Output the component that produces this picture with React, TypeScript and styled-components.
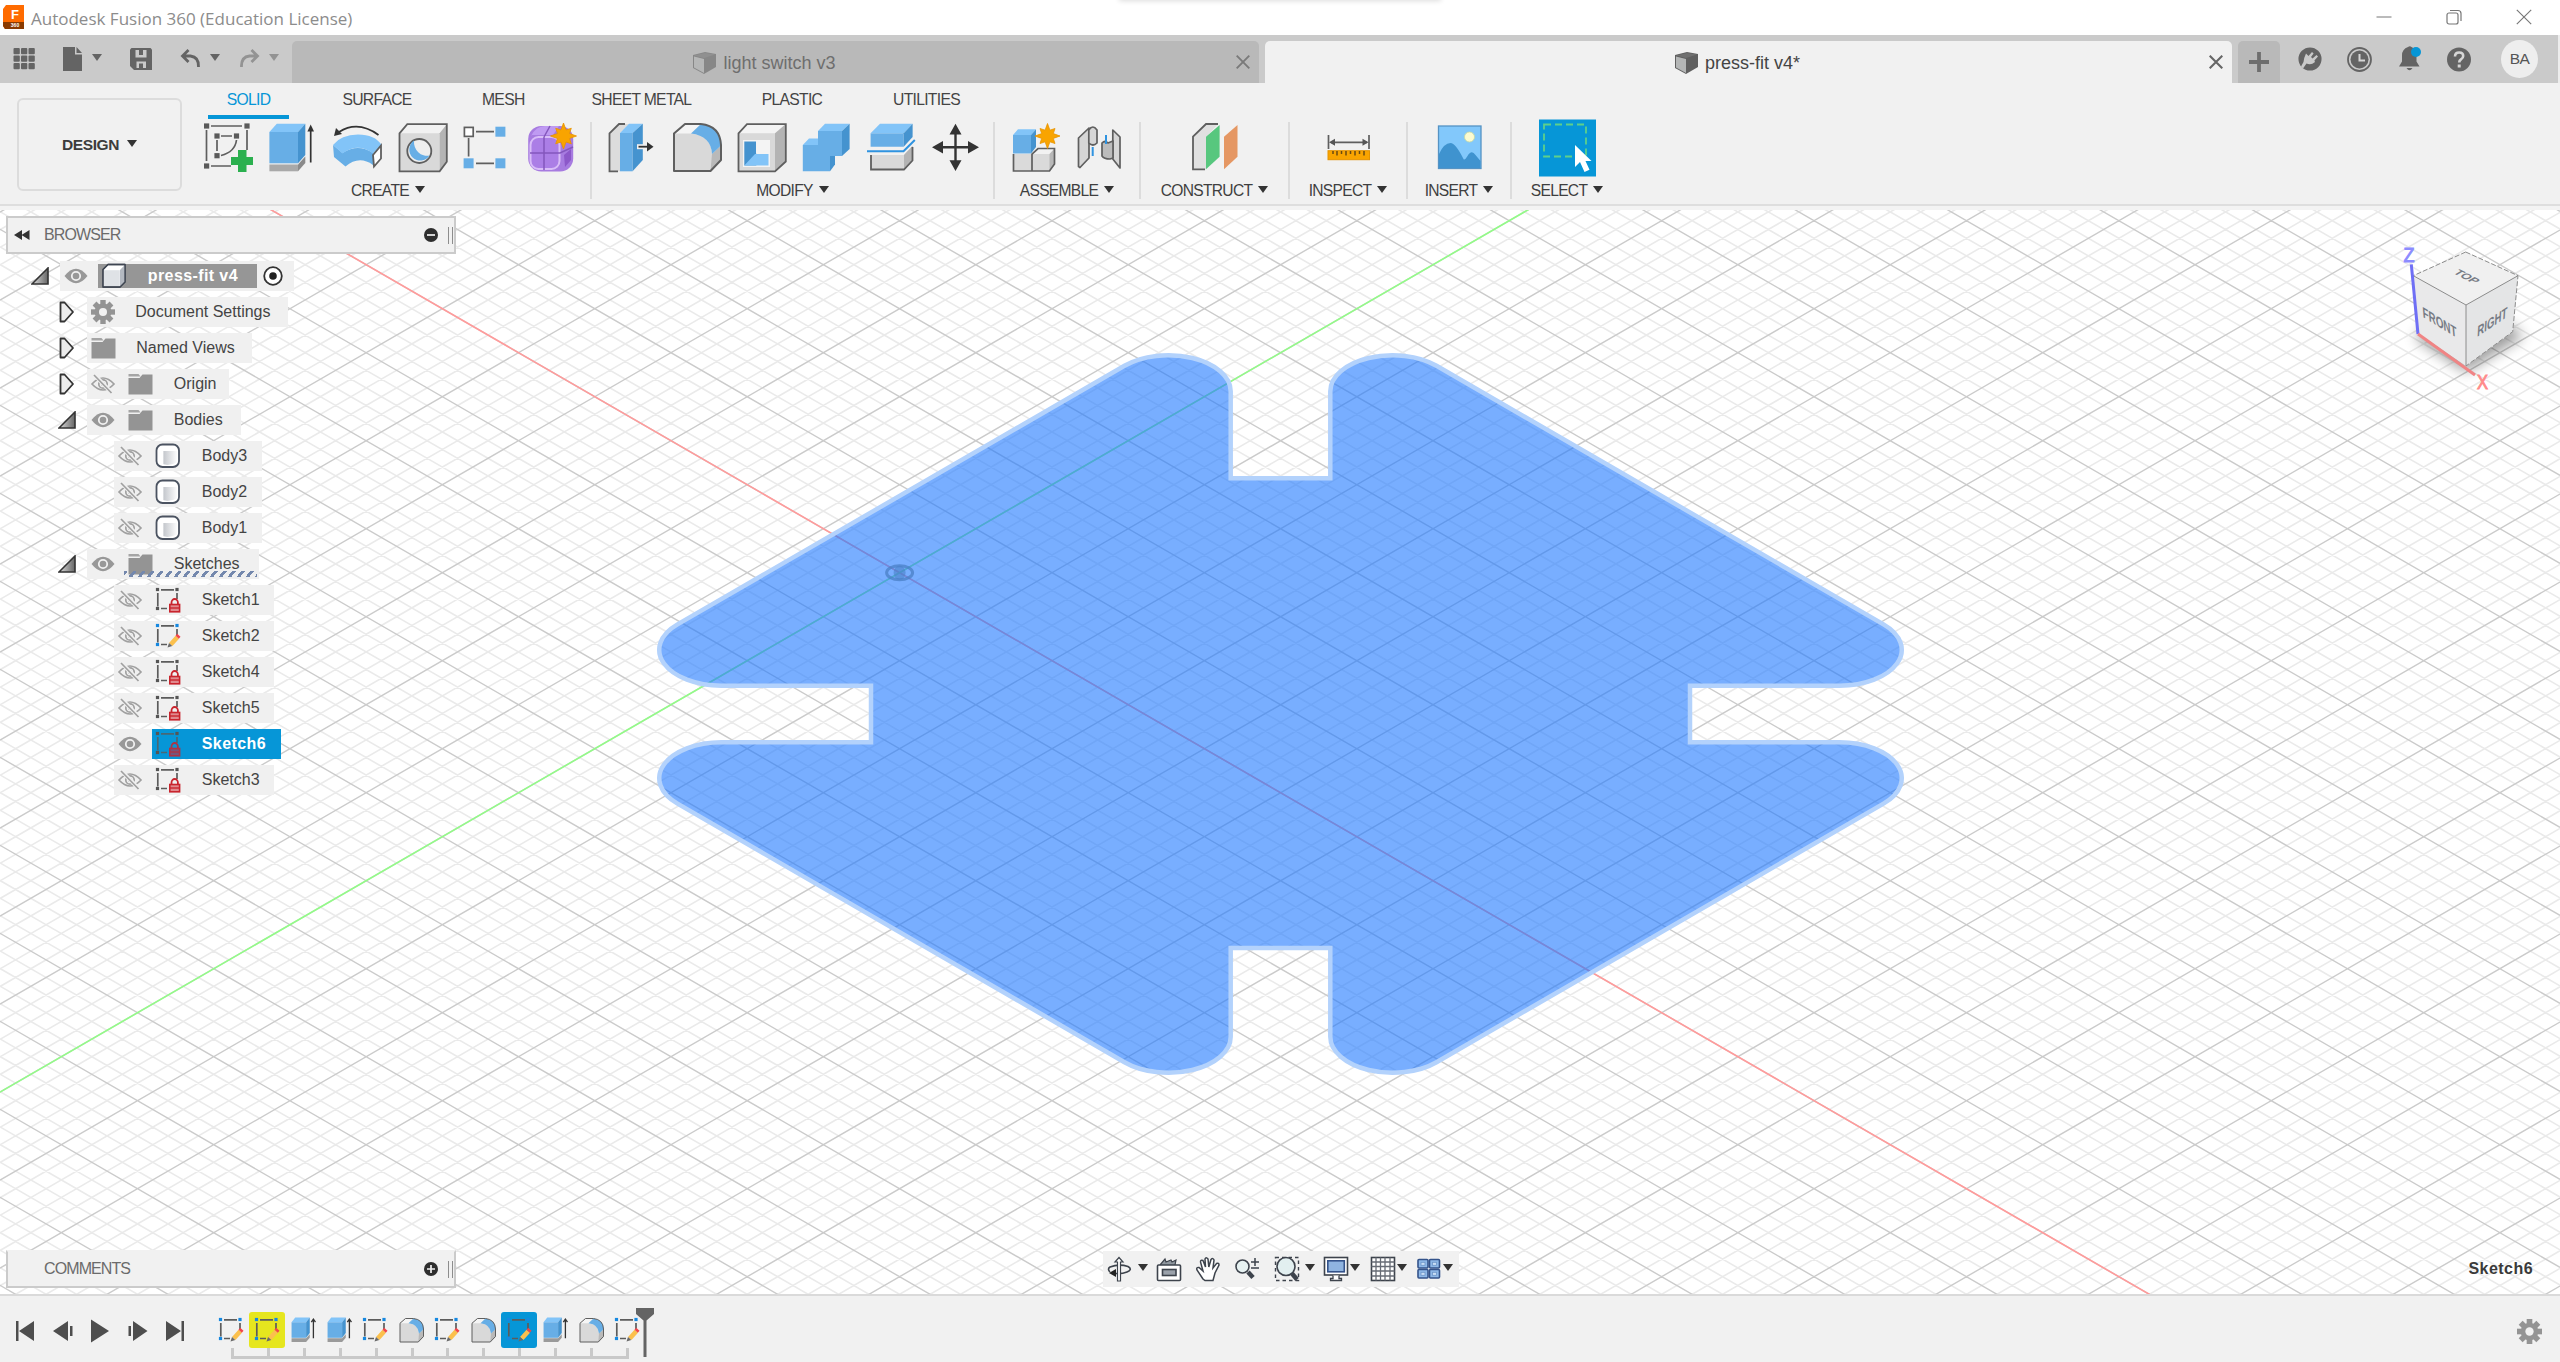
import React from "react";
import styled, { createGlobalStyle } from "styled-components";

const Global = createGlobalStyle`
  * { box-sizing: border-box; }
  body { margin: 0; background: #f0f0f0; overflow: hidden; }
  svg { display: block; flex: none; }
`;

const BLUE = "#0696d7";
const TOP = "#82c4f8";
const FACE = "#67aee6";
const SIDE = "#4593cf";
const EDGE = "#5f5f5f";

const Window = styled.div`
  width: 2560px;
  height: 1362px;
  display: flex;
  flex-direction: column;
  font-family: "Liberation Sans", Arial, sans-serif;
  color: #3c3c3c;
`;

const TitleBar = styled.header`
  position: relative;
  height: 35px;
  flex: none;
  display: flex;
  align-items: center;
  background: #fff;
  padding: 0 28px 2px 3px;
  overflow: hidden;
`;
const TitleText = styled.div`
  flex: 1;
  margin-left: 6px;
  padding-top: 4px;
  font: 17px/24px "Open Sans", "Noto Sans", sans-serif;
  letter-spacing: 0;
  color: #8c8c8c;
`;
const TitleShadow = styled.div`
  position: absolute;
  left: 1120px;
  top: -20px;
  width: 320px;
  height: 20px;
  box-shadow: 0 0 5px 1px #ddd;
`;
const WindowButtons = styled.div`
  display: flex;
  gap: 54px;
`;

const TabBar = styled.nav`
  height: 48px;
  flex: none;
  display: flex;
  align-items: flex-end;
  background: #cacaca;
  border-right: 2px solid #ededed;
`;
const QuickTools = styled.div`
  width: 291.5px;
  height: 48px;
  display: flex;
  align-items: center;
  padding-left: 13px;
`;
const QuickItem = styled.div<{ $w: number; $dim?: boolean }>`
  width: ${(p) => p.$w}px;
  display: flex;
  align-items: center;
  gap: 9px;
  color: ${(p) => (p.$dim ? "#939393" : "#646464")};
`;
const DocTab = styled.div<{ $active?: boolean }>`
  width: 967px;
  height: 42px;
  margin-right: 6px;
  padding-right: 9px;
  display: flex;
  align-items: center;
  border-radius: 5px 5px 0 0;
  background: ${(p) => (p.$active ? "#f1f1f1" : "#b9b9b9")};
  color: ${(p) => (p.$active ? "#444" : "#6e6e6e")};
  font-size: 18px;
`;
const DocName = styled.div`
  flex: 1;
  padding-left: 1px;
  padding-top: 2px;
  display: flex;
  justify-content: center;
  align-items: center;
  gap: 6px;
`;
const NewTab = styled.div`
  width: 42px;
  height: 42px;
  display: flex;
  align-items: center;
  justify-content: center;
  border-radius: 5px 5px 0 0;
  background: #b9b9b9;
`;
const AccountTools = styled.div`
  flex: 1;
  height: 48px;
  display: flex;
  align-items: center;
  justify-content: space-between;
  padding: 0 20px 0 18px;
`;
const Avatar = styled.div`
  width: 37px;
  height: 38px;
  border-radius: 50%;
  margin-left: 4px;
  background: #eee;
  display: flex;
  align-items: center;
  justify-content: center;
  font-size: 15.5px;
  letter-spacing: -0.5px;
  color: #555;
`;

const Ribbon = styled.section`
  height: 127px;
  flex: none;
  display: flex;
  padding-left: 17px;
  background: #f1f1f1;
  border-bottom: 4px solid #f3f3f3;
  box-shadow: inset 0 -2px 0 #dedede;
`;
const Workspace = styled.button`
  width: 165px;
  height: 93px;
  margin: 15px 4px 0 0;
  padding: 0;
  display: flex;
  align-items: center;
  justify-content: center;
  gap: 8px;
  background: #f1f1f1;
  border: 2px solid #dcdcdc;
  border-radius: 6px;
  font: bold 15.5px "Liberation Sans", sans-serif;
  letter-spacing: -0.4px;
  color: #3c3c3c;
`;
const RibbonMain = styled.div`
  display: flex;
  flex-direction: column;
`;
const RibbonTabs = styled.div`
  height: 36px;
  flex: none;
  padding-left: 22px;
  display: flex;
`;
const RibbonTab = styled.div<{ $active?: boolean; $gap: number; $w: number }>`
  width: ${(p) => p.$w}px;
  margin-right: ${(p) => p.$gap}px;
  text-align: center;
  white-space: nowrap;
  font-size: 15.7px;
  line-height: 32px;
  padding-top: 1px;
  letter-spacing: -0.7px;
  color: ${(p) => (p.$active ? BLUE : "#444")};
  border-bottom: 4px solid ${(p) => (p.$active ? BLUE : "transparent")};
`;
const Groups = styled.div`
  display: flex;
`;
const Group = styled.div<{ $w: number; $last?: boolean }>`
  width: ${(p) => p.$w}px;
  height: 77px;
  margin-top: 3px;
  display: flex;
  flex-direction: column;
  align-items: center;
  border-right: ${(p) => (p.$last ? 0 : 2)}px solid #dcdcdc;
`;
const IconRow = styled.div<{ $shift: number }>`
  height: 52px;
  flex: none;
  padding-left: ${(p) => p.$shift}px;
  display: flex;
  align-items: center;
  gap: 14.8px;
`;
const GroupLabel = styled.div`
  height: 34px;
  flex: none;
  display: flex;
  align-items: center;
  gap: 6px;
  font-size: 15.6px;
  letter-spacing: -0.7px;
  color: #3f3f3f;
`;
const Caret = styled.i<{ $c?: string }>`
  width: 0;
  height: 0;
  margin-top: -3px;
  border: 5px solid transparent;
  border-top: 7px solid ${(p) => p.$c || "#333"};
  border-bottom: 0;
`;

const Viewport = styled.main`
  position: relative;
  height: 1084px;
  flex: none;
  background: #fff;
  overflow: hidden;
`;
const Panel = styled.div<{ $top: number; $open?: boolean }>`
  position: absolute;
  left: 6px;
  top: ${(p) => p.$top}px;
  width: 450px;
  height: 38px;
  padding: 0 1px 0 6px;
  display: flex;
  align-items: center;
  background: #f1f1f1;
  border: 2px solid #cbcbcb;
  border-top-color: ${(p) => (p.$open ? "#cbcbcb" : "#f1f1f1")};
  font-size: 16px;
  letter-spacing: -0.9px;
  color: #6b6b6b;
`;
const PanelTitle = styled.span`
  flex: 1;
  padding-left: 14px;
`;
const Handle = styled.div`
  width: 5px;
  height: 17px;
  margin-left: 10px;
  border-left: 1.5px solid #8d8d8d;
  border-right: 1.5px solid #8d8d8d;
`;
const Tree = styled.div`
  position: absolute;
  left: 0;
  top: 48px;
  display: flex;
  flex-direction: column;
`;
const TreeRow = styled.div`
  height: 36px;
  display: flex;
  align-items: center;
`;
const Expander = styled.div<{ $x: number; $w: number }>`
  width: ${(p) => p.$w}px;
  padding-left: ${(p) => p.$x}px;
`;
const RowBody = styled.div<{ $w: number }>`
  position: relative;
  width: ${(p) => p.$w}px;
  height: 30px;
  padding-left: 3.8px;
  display: flex;
  align-items: center;
  background: #f0f0f0;
`;
const Vis = styled.div`
  width: 37.5px;
  flex: none;
`;
const RowLabel = styled.span`
  padding-left: 20.5px;
  white-space: nowrap;
  font-size: 16px;
  color: #444;
`;
const Picked = styled.div<{ $bg: string; $w: number; $h: number }>`
  width: ${(p) => p.$w}px;
  height: ${(p) => p.$h}px;
  flex: none;
  margin: 0 6px 0 -3.8px;
  padding-left: 3.8px;
  display: flex;
  align-items: center;
  background: ${(p) => p.$bg};
  ${RowLabel} { color: #fff; font-weight: bold; letter-spacing: 0.4px; font-size: 16px; }
`;
const Hatch = styled.div`
  position: absolute;
  left: 37px;
  right: 2px;
  bottom: 2px;
  height: 6px;
  background: repeating-linear-gradient(128deg, #7488ad 0 3px, transparent 3px 7.1px);
`;
const NavBar = styled.div`
  position: absolute;
  left: 1103px;
  top: 1041px;
  width: 356px;
  height: 36px;
  padding-left: 3px;
  display: flex;
  align-items: center;
  background: #f1f1f1;
`;
const NavItem = styled.div<{ $w: number; $gap: number }>`
  width: ${(p) => p.$w}px;
  display: flex;
  align-items: center;
  gap: ${(p) => p.$gap}px;
`;
const ActiveName = styled.div`
  position: absolute;
  right: 27px;
  top: 1050px;
  font: bold 16px/18px "Liberation Sans", sans-serif;
  letter-spacing: 0.45px;
  color: #3a3a3a;
`;

const Timeline = styled.footer`
  flex: 1;
  display: flex;
  align-items: flex-start;
  background: #f1f1f1;
  border-top: 2px solid #dadada;
`;
const Playback = styled.div`
  width: 213px;
  height: 70px;
  display: flex;
  align-items: center;
  padding: 0 0 0 15px;
  gap: 17.5px;
`;
const Features = styled.div`
  padding-top: 16px;
  position: relative;
`;
const FeatureRow = styled.div`
  display: flex;
`;
const Feature = styled.div<{ $bg?: string }>`
  width: 36px;
  height: 36px;
  display: flex;
  align-items: center;
  justify-content: center;
  border-radius: 3px;
  background: ${(p) => p.$bg || "transparent"};
`;
const Track = styled.div`
  display: flex;
  width: 398px;
  height: 11px;
  margin-left: 18px;
  justify-content: space-between;
  border-bottom: 3px solid #c9c9c9;
`;
const Tick = styled.div`
  width: 3px;
  height: 8px;
  background: #c9c9c9;
`;
const Marker = styled.div`
  position: absolute;
  left: 423px;
  top: 12px;
`;
const TimelineEnd = styled.div`
  margin-left: auto;
  height: 70px;
  padding-right: 18px;
  display: flex;
  align-items: center;
`;

/* ---------- shared drawings ---------- */
type Pts = { p: string; f: string };
const Poly = ({ p, f }: Pts) => <polygon points={p} fill={f} />;
const Star = ({ x, y, r }: { x: number; y: number; r: number }) => {
  const pts = Array.from({ length: 16 }, (_, i) => {
    const a = (i * Math.PI) / 8 - Math.PI / 2;
    const q = i % 2 ? r * 0.5 : i % 4 ? r * 0.85 : r;
    return `${(x + q * Math.cos(a)).toFixed(1)},${(y + q * Math.sin(a)).toFixed(1)}`;
  }).join(" ");
  return <polygon points={pts} fill="#f9a400" stroke="#e79300" strokeWidth=".8" />;
};
const Tool = ({ children }: { children: React.ReactNode }) => (
  <svg width="50" height="50" viewBox="0 0 50 50">{children}</svg>
);
const Gear = ({ s = 24 }: { s?: number }) => (
  <svg width={s} height={s} viewBox="-12 -12 24 24" fill="#949494">
    {[0, 45, 90, 135].map((a) => (
      <rect key={a} x="-2.7" y="-12" width="5.4" height="24" transform={`rotate(${a})`} />
    ))}
    <circle r="8.4" />
    <circle r="4" fill="#f1f1f1" />
  </svg>
);
const Cross = ({ s, w, c }: { s: number; w: number; c: string }) => (
  <svg width={s} height={s} viewBox="0 0 14 14" stroke={c} strokeWidth={w}>
    <path d="M.7.7 13.3 13.3M13.3.7.7 13.3" />
  </svg>
);
const DocCube = ({ dim }: { dim?: boolean }) => (
  <svg width="25" height="24" viewBox="0 0 25 24" opacity={dim ? 0.55 : 1}>
    <path d="M1 4 13 1l11 2v13L12 23 1 17z" fill="#606060" />
    <path d="M2 5.5 12 8v14L2 16.5z" fill="#b4b6b6" />
    <path d="M2 4.500 13 2l10 1.500L12 7z" fill="#707070" />
  </svg>
);
const Eye = ({ off }: { off?: boolean }) =>
  off ? (
    <svg width="24" height="20" viewBox="0 0 24 20" fill="none" stroke="#a0a0a0" strokeWidth="1.7">
      <path d="M1 10Q12-2 23 10 12 22 1 10z" />
      <circle cx="12" cy="10" r="4.200" />
      <circle cx="12" cy="10" r="1.200" />
      <path d="M3.500 1 21 19" stroke="#f0f0f0" strokeWidth="4" />
      <path d="M3 1 20.500 19" />
    </svg>
  ) : (
    <svg width="24" height="20" viewBox="0 0 24 20">
      <path d="M.500 10Q12-4.500 23.500 10 12 24.500.500 10z" fill="#989898" />
      <circle cx="12" cy="10" r="4.200" fill="none" stroke="#f0f0f0" strokeWidth="1.800" />
    </svg>
  );
const Folder = () => (
  <svg width="25" height="22" viewBox="0 0 25 22" fill="#949494">
    <path d="M.5 1h10l2 2.500H.5z" fill="#a5a5a5" />
    <path d="M.5 5h11l3-3.500h10v20H.5z" />
  </svg>
);
const BodyIcon = () => (
  <svg width="26" height="26" viewBox="0 0 26 26">
    <defs>
      <linearGradient id="cyl">
        <stop offset="0" stopColor="#fff" />
        <stop offset=".25" stopColor="#fff" />
        <stop offset=".3" stopColor="#c6c9ce" />
        <stop offset="1" stopColor="#fff" />
      </linearGradient>
    </defs>
    <rect x="1.500" y="1.500" width="22.500" height="22.500" rx="6" fill="#fff" stroke="#4b5361" strokeWidth="1.800" />
    <path d="M3 8h19.500v11q-10 6-19.500 0z" fill="url(#cyl)" />
  </svg>
);
const RootIcon = () => (
  <svg width="26" height="26" viewBox="0 0 26 26" stroke="#3f4652" strokeWidth="1.300" strokeLinejoin="round">
    <path d="M2 6.500 7 1.500h17v17.500l-5 5H2z" fill="#fff" />
    <path d="M2.800 7.200h16v16h-16z" fill="#dfe2e6" stroke="none" />
    <path d="M19 7 24 1.800V19l-5 5z" fill="#b4b9c1" stroke="none" />
    <path d="M2 6.500 7 1.500h17v17.500l-5 5H2z" fill="none" />
  </svg>
);
const Pencil = () => (
  <g>
    <path d="M14 20 20.500 12.800l3.500 3-6.500 7.200z" fill="#fbc04d" />
    <path d="M20.500 12.800l1.700-2 3.300 3-1.700 2z" fill="#f2454a" />
    <path d="M14 20l3.300 3-4.800 1.500z" fill="#6a6a6a" />
  </g>
);
const SketchIcon = ({ kind, on }: { kind: "lock" | "edit"; on?: boolean }) => {
  const dot = kind === "edit" ? "#1688e0" : "#555";
  return (
    <svg width="26" height="26" viewBox="0 0 26 26">
      <path d="M6 2.800h13M2.800 6v13.500M22 6v6M6 21.500h6" stroke="#5c5c5c" strokeWidth="1.700" opacity={on ? 0.8 : 1} />
      {[[2.5, 2.5], [22, 2.5], [2.5, 21.5]].map(([x, y]) => (
        <rect key={`${x}-${y}`} x={x - 1.6} y={y - 1.6} width="3.200" height="3.200" fill={dot} />
      ))}
      {kind === "edit" ? (
        <Pencil />
      ) : (
        <g stroke="#c9242d" opacity={on ? 0.85 : 1}>
          <path d="M16.500 18v-2.500a3.200 3.500 0 0 1 6.400 0V18" fill="none" strokeWidth="1.800" />
          <rect x="14.800" y="17.500" width="9.800" height="7.300" fill={on ? "#8a4a6c" : "#e08a8e"} strokeWidth="1.600" />
          <path d="M15 21h9" strokeWidth="1.400" />
        </g>
      )}
    </svg>
  );
};
const ExtrudeSmall = () => (
  <svg width="26" height="26" viewBox="0 0 50 50">
    <Poly p="3,41 31,41 38,33 38,40 31,48 3,48" f="#9a9a9a" />
    <Poly p="3,10 31,10 31,40 3,40" f={FACE} />
    <Poly p="3,10 10,1 38,1 31,10" f={TOP} />
    <Poly p="31,10 38,1 38,31 31,40" f={SIDE} />
    <path d="M45 6v35M41 10l4-6 4 6" stroke="#333" strokeWidth="2.500" fill="none" />
  </svg>
);
const FilletShape = () => (
  <g strokeLinejoin="round">
    <path d="M2 10.500 13 1h16l-10 9.500Q39 12 40 31l9-9v15L38.500 48H2z" fill="#d9d9d9" />
    <path d="M2 10.500 13 1h16l-10 9.500z" fill="#f5f5f5" />
    <path d="M40 31l9.500-9v15L38.500 48z" fill="#b9b9b9" />
    <path d="M19 10.500 29 1Q49 4 49.500 22L40 31Q39 13 19 10.500z" fill={FACE} />
    <path d="M29 1H13L2 10.500V48h36.500L49 37V22Q48 3 29 1" fill="none" stroke={EDGE} strokeWidth="2" />
  </g>
);

/* ---------- ribbon icons ---------- */
const sq = (x: number, y: number, f = "#5a5a5a", r = 2.6) => (
  <rect key={`${x},${y}`} x={x - r} y={y - r} width={2 * r} height={2 * r} fill={f} />
);
const CreateIcons = () => (
  <>
    <Tool>
      <path d="M7 3h31M2.500 7v31M43 7v20M7 43h20M17 13h11M13 17v11M32.500 17Q31 29 17 32.500" fill="none" stroke={EDGE} strokeWidth="1.700" />
      {[[2.6, 3], [43, 3], [2.6, 43], [13, 13], [32.5, 13], [13, 32.700]].map(([x, y]) => sq(x, y))}
      <path d="M34 27h8.500v7h6.500v8h-6.500v7H34v-7h-7v-8h7z" fill="#2bb04f" />
    </Tool>
    <Tool>
      <Poly p="1.4,41.5 30,41.5 30,48.3 1.4,48.3" f="#a9a9a9" />
      <Poly p="30,41.5 37.3,33.500 37.3,40 30,48.3" f="#8a8a8a" />
      <Poly p="1.4,9 30,9 30,40.3 1.4,40.3" f={FACE} />
      <Poly p="1.4,9 8.800,.7 37.3,.7 30,9" f={TOP} />
      <Poly p="30,9 37.3,.7 37.3,32 30,40.3" f={SIDE} />
      <path d="M42.700 7v32.500" stroke="#333" strokeWidth="1.700" />
      <Poly p="42.700,1.500 46,8.500 39.400,8.500" f="#333" />
    </Tool>
    <Tool>
      <path d="M0 22 9.500 30Q25 20 40 30v12q-14-10-27.500 1.500L1 34z" fill={FACE} />
      <path d="M0 22Q8 11.500 25 11.500T48.500 22L40 30.500Q25 19 9.500 30.500z" fill={TOP} />
      <path d="M40 32l8-9.500v13L41 43.500z" fill="#fff" stroke={EDGE} strokeWidth="1.800" />
      <path d="M6 9Q25-3 45.500 12" fill="none" stroke="#333" strokeWidth="1.800" />
      <Poly p="1,13 3,5 9,11" f="#333" />
    </Tool>
    <Tool>
      <path d="M1.200 10.300 9.300 1H49v37.700L41.600 48.300H1.200z" fill="#f2f2f2" />
      <Poly p="1.200,10.300 41.600,10.300 41.600,48.300 1.200,48.300" f="#d9d9d9" />
      <Poly p="41.600,10.300 49,1 49,38.700 41.600,48.300" f="#b4b4b4" />
      <path d="M1.500 10.300 9.300 1.200H48.800v37.500L41.600 48.300H1.500z" fill="none" stroke={EDGE} strokeWidth="1.800" />
      <circle cx="21.300" cy="28" r="12" fill="#eee" stroke={EDGE} strokeWidth="1.800" />
      <path d="M16 17.500a11 11 0 1 0 15.500 15A13 14 0 0 1 16 17.500z" fill={FACE} />
    </Tool>
    <Tool>
      <path d="M13 8.700h18M5.600 15v18.500M13 40.300h18" stroke={EDGE} strokeWidth="1.700" />
      <rect x="1.400" y="4.400" width="8.800" height="9" fill="#fff" stroke={EDGE} strokeWidth="1.700" />
      {[[37.4, 8.7], [5.6, 40.300], [37.4, 40.300]].map(([x, y]) => sq(x, y, FACE, 5))}
    </Tool>
    <Tool>
      <rect x="1.200" y="3" width="45" height="45.500" rx="13" fill="#a77be0" />
      <path d="M4 13Q9 3 18 3h14l-6 9H4z" fill="#bf9af2" />
      <rect x="3.500" y="14" width="29" height="32" rx="8" fill="#ab7ee6" stroke="#d9bdf8" strokeWidth="2" />
      <path d="M17 14v33M3 30h30l13-6M17 14l6-11M33 30" stroke="#8457bd" strokeWidth="1.500" fill="none" />
      <path d="M37 32l7-6v11l-6 7z" fill="#8c58c9" />
      <Star x={36.500} y={13} r={13} />
    </Tool>
  </>
);
const ModifyIcons = () => (
  <>
    <Tool>
      <path d="M2.500 10.300 12 1h10l-9 9v38.300H2.500z" fill="#dcdcdc" />
      <path d="M18 1h-6L2.500 10.300v38H11" fill="none" stroke={EDGE} strokeWidth="1.800" />
      <Poly p="13,10 25.600,10 25.600,48.300 13,48.300" f={FACE} />
      <Poly p="13,10 22,.7 35.8,.7 25.600,10" f={TOP} />
      <Poly p="25.600,10 35.8,.7 35.8,37 25.600,48.300" f={SIDE} />
      <path d="M30 23.700h12" stroke="#f1f1f1" strokeWidth="5" />
      <path d="M31.500 23.700h10" stroke="#333" strokeWidth="1.800" />
      <Poly p="40,19 46.500,23.700 40,28.400" f="#333" />
    </Tool>
    <Tool><FilletShape /></Tool>
    <Tool>
      <path d="M1.500 10.300 10 1H48.800v37.500L38 48.300H1.500z" fill="#f4f4f4" />
      <Poly p="1.500,10.300 38,10.300 38,48.300 1.500,48.300" f="#d9d9d9" />
      <Poly p="38,10.300 48.800,1 48.800,38.500 38,48.300" f="#b4b4b4" />
      <path d="M1.500 10.300 10 1.200H48.800v37.300L38 48.300H1.500z" fill="none" stroke={EDGE} strokeWidth="1.800" />
      <rect x="6" y="17" width="27" height="27" fill="#f4f4f4" />
      <rect x="7.300" y="18.500" width="12" height="24" fill={SIDE} />
      <Poly p="7.300,42.500 18,31 31.500,31 31.500,42.500" f={TOP} />
      <rect x="19" y="18" width="14" height="12.500" fill="#f4f4f4" />
    </Tool>
    <Tool>
      <Poly p="1.800,22 17,22 17,8 41,8 41,33 29,33 29,48.300 1.800,48.300" f={FACE} />
      <Poly p="1.800,22 8,15.500 17,15.500 17,22" f={TOP} />
      <Poly p="17,8 24,.7 48.600,.7 41,8" f={TOP} />
      <Poly p="41,8 48.600,.7 48.600,26 41,33" f={SIDE} />
      <Poly p="29,33 34,33 34,41.500 29,48.300" f={SIDE} />
    </Tool>
    <Tool>
      <Poly p="4.600,10.300 37.7,10.300 37.7,23.700 4.600,23.700" f={FACE} />
      <Poly p="4.600,10.300 14,.7 46.600,.7 37.7,10.300" f={TOP} />
      <Poly p="37.7,10.300 46.600,.7 46.600,14 37.7,23.700" f={SIDE} />
      <path d="M1 28.300h36.500L48.800 17" fill="none" stroke="#2f93e0" strokeWidth="2" />
      <path d="M5 32h33l8.500-9v14.500L38 46.500H5z" fill="#d9d9d9" />
      <path d="M38 32l8.500-9v14.500L38 46.500z" fill="#b4b4b4" />
      <path d="M5 32v14.500h33l8.500-9V24" fill="none" stroke={EDGE} strokeWidth="1.800" />
    </Tool>
    <Tool>
      <path d="M24.500 8v33M8 24.300h33" stroke="#333" strokeWidth="2.400" />
      <path d="M24.500.8 30.500 11.500h-12zM24.500 48l6-10.700h-12zM1 24.300 12 18v12.600zM48 24.300 37 18v12.600z" fill="#333" />
    </Tool>
  </>
);
const AssembleIcons = () => (
  <>
    <Tool>
      <path d="M2.500 31h36l5-5.500V41l-5 7h-36z" fill="#dadada" />
      <path d="M22 31l5-5.500h16.500l-5 5.500z" fill="#f2f2f2" />
      <path d="M38.500 31l5-5.500V41l-5 7z" fill="#b8b8b8" />
      <path d="M2.500 31v17h36l5-7V25.500H27L21 31v17" fill="none" stroke={EDGE} strokeWidth="1.700" />
      <Poly p="2,12 20,12 20,30.500 2,30.500" f={FACE} />
      <Poly p="2,12 7,6.300 25,6.300 20,12" f={TOP} />
      <Poly p="20,12 25,6.300 25,24 20,30.500" f={SIDE} />
      <Star x={36.500} y={13} r={12.500} />
    </Tool>
    <Tool>
      <g fill="#d6d6d6" stroke={EDGE} strokeWidth="1.700" strokeLinejoin="round">
        <path d="M2.500 15 13 5v30L4 44.500l-1.500-1z" />
        <path d="M12.800 7q4-6 8.200 0v13q-4 4-8.200 0z" />
        <path d="M36.800 7l7.200 7v31l-7.200-9z" />
        <path d="M26 20q3-3 6 0l5-2v17l-3 1q-6 0-8-3z" fill="#bcbcbc" />
      </g>
      <path d="M16.700 24v9M30 12v9" stroke="#2f93e0" strokeWidth="2" />
    </Tool>
  </>
);
const ConstructIcon = () => (
  <Tool>
    <path d="M3 13.700 16 1h12L16 13.700v32.600H3z" fill="#e0e0e0" />
    <path d="M28 1H16L3 13.700v32.600h12" fill="none" stroke={EDGE} strokeWidth="1.800" />
    <Poly p="16,13.700 29.600,2 29.600,33.700 16,46.300" f="#57c77e" />
    <Poly p="34,13.700 47.500,2 47.500,33.700 34,46.300" f="#e59763" />
  </Tool>
);
const InspectIcon = () => (
  <Tool>
    <path d="M4.500 12v14M45 12v14M7 19.300h36" stroke={EDGE} strokeWidth="1.700" />
    <path d="M5 19.300l6-3.500v7zM44.500 19.300l-6-3.500v7z" fill="#555" />
    <rect x="4" y="27.700" width="41.500" height="9" fill="#f9a400" stroke="#e59300" />
    <path d="M9 28v3M13 28v4.500M17.500 28v3M22 28v4.500M26.500 28v3M31 28v4.500M35.500 28v3M40 28v4.500" stroke="#6b4a10" strokeWidth="1.500" />
  </Tool>
);
const InsertIcon = () => (
  <Tool>
    <rect x="3.500" y="3" width="42.500" height="42.500" fill="#82c8fb" stroke="#5593c4" strokeWidth="1.300" />
    <path d="M4 31q5-11 11.500-11 5 0 13 16 1 2 4-3 4-7 8-1l5 6v7H4z" fill="#3f93cf" />
    <circle cx="34.500" cy="14" r="5" fill="#fbfbd0" stroke="#c9d9a0" strokeWidth=".8" />
  </Tool>
);
const SelectTool = () => (
  <svg width="58" height="58" viewBox="0 0 58 58">
    <rect width="57" height="57" y=".5" fill={BLUE} />
    <path d="M5 5.500h42v32H5z" fill="none" stroke="#5ed08a" strokeWidth="1.800" strokeDasharray="7 4" />
    <path d="M36 26v22l5-5 4.500 10 5-2.200L46.500 42h6z" fill="#fff" />
  </svg>
);

/* ---------- viewport drawing ---------- */
const OX = 899.6;
const OY = 572.7;
const SLOPE = 0.5774;
const STEP = 17.6;
const gridPath = (major: boolean) => {
  let d = "";
  for (let k = -150; k <= 150; k++) {
    if ((k % 5 === 0) !== major) continue;
    for (const s of [SLOPE, -SLOPE]) {
      const y0 = OY + k * STEP - s * OX;
      const y1 = y0 + s * 2560;
      if (Math.max(y0, y1) < 205 || Math.min(y0, y1) > 1300) continue;
      d += `M0 ${y0.toFixed(1)}L2560 ${y1.toFixed(1)}`;
    }
  }
  return d;
};
const PLATE =
  "M1124.500 365.800A62.200 35.900 0 0 1 1230.700 391.200V478.300H1330.300V391.200A62.200 35.900 0 0 1 1436.500 365.800" +
  "L1883.500 624.400A62.200 35.900 0 0 1 1839.500 685.700H1690V742.300H1839.500A62.200 35.900 0 0 1 1883.500 803.600" +
  "L1436.500 1062.200A62.200 35.900 0 0 1 1330.300 1036.800V948H1230.700V1036.800A62.200 35.900 0 0 1 1124.500 1062.200" +
  "L677.500 803.600A62.200 35.900 0 0 1 721.500 742.300H871V685.700H721.500A62.200 35.900 0 0 1 677.500 624.400Z";

const ViewCube = () => (
  <g>
    <defs>
      <filter id="soft" x="-30%" y="-30%" width="160%" height="160%">
        <feGaussianBlur stdDeviation="7" />
      </filter>
    </defs>
    <path d="M2415 338 2466 372 2524 336 2505 322 2430 322z" fill="#000" opacity=".38" filter="url(#soft)" />
    <path d="M2465.700 252 2518 275.700 2512.700 331.700 2466 366 2417.700 333.300 2413.300 275.700z" fill="#e9e9ea" />
    <path d="M2465.700 252 2518 275.700 2466 305 2413.300 275.700z" fill="#f0f0f0" />
    <path d="M2466 305 2518 275.700 2512.700 331.700 2466 366z" fill="#e4e5e6" />
    <g fill="none" stroke="#8c8c8c" strokeWidth="1">
      <path d="M2465.700 252 2518 275.700 2512.700 331.700 2466 366M2465.700 252 2413.300 275.700" strokeDasharray="5 2" />
      <path d="M2413.300 275.700 2466 305 2518 275.700M2466 305V366" />
    </g>
    <g fontFamily="Liberation Sans, sans-serif" fontSize="16" fill="#767b84" textAnchor="middle">
      <text transform="matrix(.78 .4 -.72 .42 2463.500 278.500)" fontWeight="bold" fontSize="13.500">TOP</text>
      <text transform="matrix(.62 .38 .08 .95 2440 327.500)" fontWeight="bold">FRONT</text>
      <text transform="matrix(.6 -.4 -.06 .95 2492 327)" fontWeight="bold">RIGHT</text>
    </g>
    <path d="M2411.300 264.300 2418 334" stroke="#6f6ff5" strokeWidth="3" />
    <path d="M2418 334 2475 375" stroke="#f08484" strokeWidth="3" />
    <g fontFamily="Liberation Sans, sans-serif" fontSize="21" strokeWidth="1" textAnchor="middle">
      <text x="2409" y="261.500" fill="#8c8cff" stroke="#8c8cff" textLength="11" lengthAdjust="spacingAndGlyphs">Z</text>
      <text x="2482.500" y="388.500" fill="#ff8a8a" stroke="#ff8a8a" textLength="11" lengthAdjust="spacingAndGlyphs">X</text>
    </g>
  </g>
);
const Scene = () => (
  <svg width="2560" height="1084" viewBox="0 210 2560 1084">
    <path d={gridPath(false)} stroke="#eaeaea" strokeWidth="1.600" />
    <path d={gridPath(true)} stroke="#cbcbcb" strokeWidth="1.400" />
    <path d={`M0 ${OY - SLOPE * OX}L2560 ${OY + SLOPE * (2560 - OX)}`} stroke="#ff9b9b" strokeWidth="1.600" />
    <path d={`M0 ${OY + SLOPE * OX}L2560 ${OY - SLOPE * (2560 - OX)}`} stroke="#93fb88" strokeWidth="1.600" />
    <path d={PLATE} fill="#1e78ff" fillOpacity=".6" />
    <path d={PLATE} fill="none" stroke="#b3d2fc" strokeWidth="4.500" />
    <ellipse cx={OX} cy={OY} rx="13" ry="7" fill="none" stroke="#4a7fc6" strokeWidth="3" strokeOpacity=".75" />
    <ellipse cx={OX} cy={OY} rx="6" ry="7" fill="#4a80c8" fillOpacity=".6" />
    <ViewCube />
  </svg>
);

/* ---------- tree ---------- */
const Closed = () => (
  <svg width="16" height="22" viewBox="0 0 16 22">
    <path d="M1.500 1.500h4L14 11l-8.500 9.500h-4z" fill="#ececec" stroke="#333" strokeWidth="1.800" strokeLinejoin="round" />
  </svg>
);
const Opened = () => (
  <svg width="18" height="18" viewBox="0 0 18 18">
    <defs>
      <linearGradient id="tri"><stop offset="0" stopColor="#ddd" /><stop offset="1" stopColor="#666" /></linearGradient>
    </defs>
    <path d="M1 17 17 1v16z" fill="url(#tri)" stroke="#333" strokeWidth="1.600" />
  </svg>
);
const Leaf = ({ name, w, icon }: { name: string; w: number; icon: React.ReactNode }) => (
  <TreeRow>
    <Expander $x={0} $w={114} />
    <RowBody $w={w}>
      <Vis><Eye off /></Vis>
      {icon}
      <RowLabel>{name}</RowLabel>
    </RowBody>
  </TreeRow>
);
const BrowserTree = () => (
  <Tree>
    <TreeRow>
      <Expander $x={31} $w={60}><Opened /></Expander>
      <RowBody $w={234}>
        <Vis><Eye /></Vis>
        <Picked $bg="#969696" $w={159} $h={24}><RootIcon /><RowLabel>press-fit v4</RowLabel></Picked>
        <svg width="20" height="20" viewBox="0 0 20 20">
          <circle cx="10" cy="10" r="8.800" fill="#fff" stroke="#333" strokeWidth="1.800" />
          <circle cx="10" cy="10" r="3.800" fill="#222" />
        </svg>
      </RowBody>
    </TreeRow>
    <TreeRow>
      <Expander $x={59} $w={87}><Closed /></Expander>
      <RowBody $w={201}><Gear /><RowLabel>Document Settings</RowLabel></RowBody>
    </TreeRow>
    <TreeRow>
      <Expander $x={59} $w={87}><Closed /></Expander>
      <RowBody $w={165}><Folder /><RowLabel>Named Views</RowLabel></RowBody>
    </TreeRow>
    <TreeRow>
      <Expander $x={59} $w={87}><Closed /></Expander>
      <RowBody $w={142}><Vis><Eye off /></Vis><Folder /><RowLabel>Origin</RowLabel></RowBody>
    </TreeRow>
    <TreeRow>
      <Expander $x={58} $w={87}><Opened /></Expander>
      <RowBody $w={154}><Vis><Eye /></Vis><Folder /><RowLabel>Bodies</RowLabel></RowBody>
    </TreeRow>
    {["Body3", "Body2", "Body1"].map((n) => <Leaf key={n} name={n} w={148} icon={<BodyIcon />} />)}
    <TreeRow>
      <Expander $x={58} $w={87}><Opened /></Expander>
      <RowBody $w={172}><Vis><Eye /></Vis><Folder /><RowLabel>Sketches</RowLabel><Hatch /></RowBody>
    </TreeRow>
    {["Sketch1", "Sketch2", "Sketch4", "Sketch5"].map((n) => (
      <Leaf key={n} name={n} w={160} icon={<SketchIcon kind={n === "Sketch2" ? "edit" : "lock"} />} />
    ))}
    <TreeRow>
      <Expander $x={0} $w={114} />
      <RowBody $w={38}>
        <Vis><Eye /></Vis>
        <Picked $bg={BLUE} $w={129.5} $h={30}><SketchIcon kind="lock" on /><RowLabel>Sketch6</RowLabel></Picked>
      </RowBody>
    </TreeRow>
    <Leaf name="Sketch3" w={160} icon={<SketchIcon kind="lock" />} />
  </Tree>
);
const RoundSign = ({ plus }: { plus?: boolean }) => (
  <svg width="14" height="14" viewBox="0 0 14 14">
    <circle cx="7" cy="7" r="7" fill="#2e2e2e" />
    <path d={plus ? "M3 7h8M7 3v8" : "M3 7h8"} stroke="#f1f1f1" strokeWidth="1.700" />
  </svg>
);

/* ---------- navigation bar ---------- */
const Ni = ({ children }: { children: React.ReactNode }) => (
  <svg width="26" height="26" viewBox="0 0 26 26" fill="none" stroke="#3d434c" strokeWidth="1.600">{children}</svg>
);
const Navigation = () => (
  <NavBar>
    <NavItem $w={50} $gap={6}>
      <Ni>
        <path d="M4 16Q1 13 4 11q9-3.500 18-.5 5 3-1 5.500-5 2-11 1.500" />
        <path d="M11.500 25V6H9l4-4.500L17 6h-2.500v19z" fill="#fff" strokeWidth="1.200" />
        <path d="M10 13v8l-7-4z" fill="#222" stroke="none" />
      </Ni>
      <Caret />
    </NavItem>
    <NavItem $w={39} $gap={0}>
      <Ni>
        <path d="M4 9 9 3l1 3 5-2 1 2 4-2-1 5" fill="#8f979f" strokeWidth="1.200" />
        <rect x="1.500" y="9" width="23" height="15.500" rx="1" fill="#fff" />
        <rect x="6.500" y="13.500" width="13.500" height="6" fill="#9aa1aa" />
      </Ni>
    </NavItem>
    <NavItem $w={39} $gap={0}>
      <Ni>
        <path d="M8 23 2 14q-1-3 2-2.500L8 15 5.500 6q0-2.500 2.500-1.500L10.500 11 10 3q1-2.500 3 0l.8 8L16 3.500q2-2 3 .5l-1 8 3.500-4.500q2.500-1 2.500 1.500L20 17l-2 7.500h-8z" fill="#fff" strokeWidth="1.500" />
      </Ni>
    </NavItem>
    <NavItem $w={40} $gap={0}>
      <Ni>
        <path d="M14 16l5 5.500" strokeWidth="4.500" />
        <circle cx="8.500" cy="10.500" r="6.500" fill="#e6f1f1" />
        <path d="M21 2v8M17 6h8M17 12h8" strokeWidth="1.500" />
      </Ni>
    </NavItem>
    <NavItem $w={49} $gap={5}>
      <Ni>
        <path d="M1.500 1.500h23v23h-23z" strokeDasharray="3.500 3" strokeWidth="1.400" />
        <path d="M18 17.500l5 6" strokeWidth="4.500" />
        <circle cx="12" cy="10.500" r="9" fill="#e2eff0" />
      </Ni>
      <Caret />
    </NavItem>
    <NavItem $w={47} $gap={1}>
      <Ni>
        <rect x="1.500" y="1.500" width="23" height="17.500" fill="#fff" />
        <rect x="4.800" y="4.800" width="16.500" height="11" fill="#8fb4e0" stroke="#34538a" />
        <path d="M10 19.500v3H7.500v2h11v-2H16v-3" fill="#fff" strokeWidth="1.300" />
      </Ni>
      <Caret />
    </NavItem>
    <NavItem $w={46} $gap={1}>
      <Ni>
        <rect x="1.500" y="1.500" width="23" height="23" fill="#fff" />
        <path d="M6 1.500v23M10.500 1.500v23M15 1.500v23M20 1.500v23M1.500 6h23M1.500 10.500h23M1.500 15h23M1.500 20h23" strokeWidth="1.300" stroke="#676c75" />
      </Ni>
      <Caret />
    </NavItem>
    <NavItem $w={40} $gap={1}>
      <Ni>
        {[[2, 3.500], [13.500, 3.500], [2, 13.500], [13.500, 13.500]].map(([x, y]) => (
          <g key={`${x}${y}`} stroke="#34538a">
            <rect x={x} y={y} width="10" height="8.500" rx="1" fill="#8fb9e8" />
            <rect x={x + 3} y={y + 2.800} width="4" height="3" fill="#c9def5" stroke="#6d95c8" strokeWidth=".8" />
          </g>
        ))}
      </Ni>
      <Caret />
    </NavItem>
  </NavBar>
);

/* ---------- timeline ---------- */
const Pb = ({ d, w = 20 }: { d: string; w?: number }) => (
  <svg width={w} height="24" viewBox={`0 0 ${w} 24`} fill="#4e4e4e"><path d={d} /></svg>
);
const FEATURES: { kind: "sketch" | "extrude" | "fillet"; bg?: string }[] = [
  { kind: "sketch" }, { kind: "sketch", bg: "#e6e61e" }, { kind: "extrude" }, { kind: "extrude" },
  { kind: "sketch" }, { kind: "fillet" }, { kind: "sketch" }, { kind: "fillet" },
  { kind: "sketch", bg: BLUE }, { kind: "extrude" }, { kind: "fillet" }, { kind: "sketch" },
];

const RIBBON_TABS = [
  { name: "SOLID", w: 81, gap: 53 }, { name: "SURFACE", w: 70, gap: 70 }, { name: "MESH", w: 41, gap: 68 },
  { name: "SHEET METAL", w: 101, gap: 69 }, { name: "PLASTIC", w: 62, gap: 70 }, { name: "UTILITIES", w: 65, gap: 0 },
];
const GROUPS = [
  { name: "CREATE", w: 406, shift: 5, icons: <CreateIcons /> },
  { name: "MODIFY", w: 403, shift: 3, icons: <ModifyIcons /> },
  { name: "ASSEMBLE", w: 146, shift: 3, icons: <AssembleIcons /> },
  { name: "CONSTRUCT", w: 149, shift: 1, icons: <ConstructIcon /> },
  { name: "INSPECT", w: 118, shift: 1, icons: <InspectIcon /> },
  { name: "INSERT", w: 104, shift: 1, icons: <InsertIcon /> },
  { name: "SELECT", w: 110, shift: 2, icons: <SelectTool /> },
];

export default function App() {
  return (
    <Window>
      <Global />
      <TitleBar>
        <svg width="22" height="24" viewBox="0 0 22 24">
          <path d="M3 0h18v24H2l-2-3V4z" fill="#ff6b00" />
          <path d="M0 17h21v7H2l-2-3z" fill="#8a3a00" />
          <text x="12" y="13.500" fontSize="13" fontWeight="bold" fill="#fff" textAnchor="middle" fontFamily="Liberation Sans">F</text>
          <text x="12" y="22" fontSize="5" fontWeight="bold" fill="#fff" textAnchor="middle" fontFamily="Liberation Sans">360</text>
        </svg>
        <TitleText>Autodesk Fusion 360 (Education License)</TitleText>
        <TitleShadow />
        <WindowButtons>
          <svg width="16" height="16" viewBox="0 0 16 16" stroke="#777"><path d="M.5 8h15" /></svg>
          <svg width="16" height="16" viewBox="0 0 16 16" stroke="#777" fill="none" strokeWidth="1.200">
            <rect x="1" y="4" width="11" height="11" rx="2" /><path d="M4 1.500h8q3 0 3 3V12" />
          </svg>
          <Cross s={16} w={1} c="#777" />
        </WindowButtons>
      </TitleBar>

      <TabBar>
        <QuickTools>
          <QuickItem $w={49}>
            <svg width="23" height="22" viewBox="0 0 23 22" fill="#646464">
              {[0, 1, 2].map((r) => [0, 1, 2].map((c) => (
                <rect key={`${r}${c}`} x={0.5 + c * 7.500} y={r * 7.500} width="6.300" height="6.300" rx="1" />
              )))}
            </svg>
          </QuickItem>
          <QuickItem $w={68}>
            <svg width="21" height="24" viewBox="0 0 21 24" fill="#646464"><path d="M1 0h12v7.500h7V24H1zM14.500 0 20 6h-5.500z" /></svg>
            <Caret $c="#646464" />
          </QuickItem>
          <QuickItem $w={50}>
            <svg width="22" height="22" viewBox="0 0 22 22">
              <path d="M1.500 0h19L22 1.500V22H4L0 18V1.500z" fill="#646464" />
              <path d="M5.500 2h11v7.500h-11zM6.500 13.500h9.500V20H6.500z" fill="#cacaca" />
              <path d="M9 2h4v5H9zM9 15.500h4V20H9z" fill="#646464" />
            </svg>
          </QuickItem>
          <QuickItem $w={59}>
            <svg width="21" height="20" viewBox="0 0 21 20" fill="none" stroke="#646464" strokeWidth="2.800"><path d="M8.500 1 2.500 7l6 6M3 7h7.500Q19 8 18.500 18" /></svg>
            <Caret $c="#646464" />
          </QuickItem>
          <QuickItem $w={50} $dim>
            <svg width="21" height="20" viewBox="0 0 21 20" fill="none" stroke="#939393" strokeWidth="2.800"><path d="M12.500 1l6 6-6 6M18 7h-7.500Q2 8 2.500 18" /></svg>
            <Caret $c="#939393" />
          </QuickItem>
        </QuickTools>
        <DocTab>
          <DocName><DocCube dim />light switch v3</DocName>
          <Cross s={14} w={1.900} c="#7a7a7a" />
        </DocTab>
        <DocTab $active>
          <DocName><DocCube />press-fit v4*</DocName>
          <Cross s={14} w={2.100} c="#666" />
        </DocTab>
        <NewTab>
          <svg width="20" height="20" viewBox="0 0 20 20" stroke="#6e6e6e" strokeWidth="3.800"><path d="M0 10h20M10 0v20" /></svg>
        </NewTab>
        <AccountTools>
          <svg width="24" height="24" viewBox="0 0 24 24">
            <circle cx="12" cy="12" r="10.300" fill="#646464" stroke="#646464" strokeWidth="2.500" />
            <path d="M8 6.500 10.500 9 14 5l1.600 1.600L13 10l1.500 1.500 4-3.500 1.500 1.500-3.600 4 .6 1.500q-4 3.500-8.500 1.500l-3.500 5-2-2 2.500-4.500Q6 10.500 8 6.500z" fill="#cacaca" />
          </svg>
          <svg width="25" height="25" viewBox="0 0 25 25">
            <circle cx="12.500" cy="12.500" r="11.500" fill="none" stroke="#646464" strokeWidth="1.800" />
            <circle cx="12.500" cy="12.500" r="9" fill="#646464" />
            <path d="M12.500 7v6.500H18" fill="none" stroke="#d6d6d6" strokeWidth="2" />
          </svg>
          <svg width="24" height="26" viewBox="0 0 24 26">
            <path d="M10 1q2-1.500 3.500 0 5 2 5 8.500v6l3 5H1l3-5v-6Q4 3 10 1zM8.500 22h6q-3 4.500-6 0z" fill="#646464" />
            <circle cx="18" cy="6" r="5" fill={BLUE} />
          </svg>
          <svg width="24" height="25" viewBox="0 0 24 25">
            <circle cx="12" cy="12.500" r="12" fill="#646464" />
            <path d="M8 9.500q0-4 4.200-4 4 0 4 3.500 0 2-2.200 3.300-1.800 1.200-1.800 3.200" fill="none" stroke="#d6d6d6" strokeWidth="2.600" />
            <rect x="10.700" y="17.500" width="3" height="3" fill="#d6d6d6" />
          </svg>
          <Avatar>BA</Avatar>
        </AccountTools>
      </TabBar>

      <Ribbon>
        <Workspace>DESIGN<Caret /></Workspace>
        <RibbonMain>
          <RibbonTabs>
            {RIBBON_TABS.map((t, i) => (
              <RibbonTab key={t.name} $active={i === 0} $w={t.w} $gap={t.gap}>{t.name}</RibbonTab>
            ))}
          </RibbonTabs>
          <Groups>
            {GROUPS.map((g, i) => (
              <Group key={g.name} $w={g.w} $last={i === GROUPS.length - 1}>
                <IconRow $shift={g.shift}>{g.icons}</IconRow>
                <GroupLabel>{g.name}<Caret /></GroupLabel>
              </Group>
            ))}
          </Groups>
        </RibbonMain>
      </Ribbon>

      <Viewport>
        <Scene />
        <Panel $top={6} $open>
          <svg width="16" height="10" viewBox="0 0 16 10" fill="#333"><path d="M8 0v10L0 5zM15.500 0v10l-8-5z" /></svg>
          <PanelTitle>BROWSER</PanelTitle>
          <RoundSign />
          <Handle />
        </Panel>
        <BrowserTree />
        <Panel $top={1040}>
          <svg width="16" height="10" />
          <PanelTitle>COMMENTS</PanelTitle>
          <RoundSign plus />
          <Handle />
        </Panel>
        <Navigation />
        <ActiveName>Sketch6</ActiveName>
      </Viewport>

      <Timeline>
        <Playback>
          <Pb d="M1 2h2.500v20H1zM19 2v20L4 12z" />
          <Pb d="M15 2v20L0 12zM17 7h2.500v10H17z" />
          <Pb d="M1 .5 19 12 1 23.500z" />
          <Pb d="M5 2v20l14.500-10zM.5 7H3v10H.5z" />
          <Pb d="M16.500 2H19v20h-2.500zM1 2v20l15-10z" />
        </Playback>
        <Features>
          <FeatureRow>
            {FEATURES.map((f, i) => (
              <Feature key={i} $bg={f.bg}>
                {f.kind === "sketch" ? <SketchIcon kind="edit" /> : f.kind === "extrude" ? <ExtrudeSmall /> : (
                  <svg width="25" height="25" viewBox="0 0 50 50"><FilletShape /></svg>
                )}
              </Feature>
            ))}
          </FeatureRow>
          <Track>{FEATURES.map((_, i) => <Tick key={i} />)}</Track>
          <Marker>
            <svg width="18" height="50" viewBox="0 0 18 50" fill="#646464"><path d="M0 0h18v6l-7.500 6.500V49h-3V12.500L0 6z" /></svg>
          </Marker>
        </Features>
        <TimelineEnd><Gear s={25} /></TimelineEnd>
      </Timeline>
    </Window>
  );
}
